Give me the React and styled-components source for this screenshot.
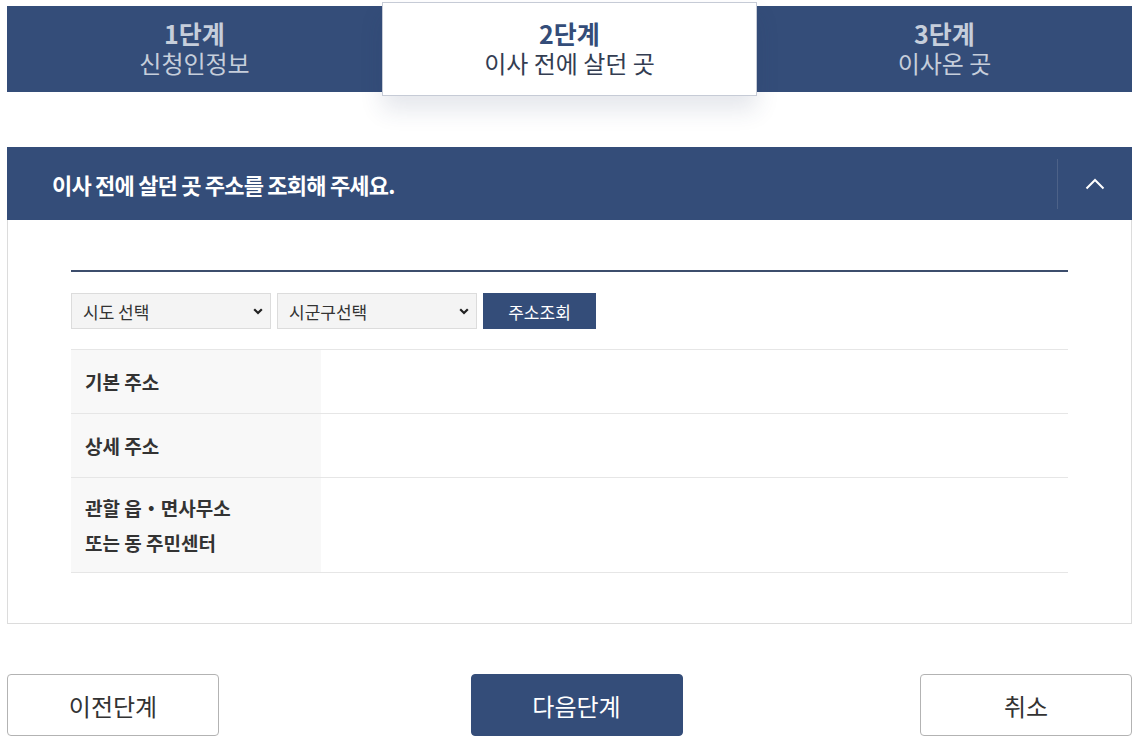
import React from "react";
import styled, { createGlobalStyle } from "styled-components";

const NAVY = "#344d79";
const FONT = `"Noto Sans CJK KR", "Noto Sans", sans-serif`;

const Global = createGlobalStyle`
  html, body { margin: 0; padding: 0; background: #fff; }
  body { font-family: ${FONT}; color: #333; }
  * { box-sizing: border-box; }
`;

const Page = styled.div`
  padding: 6px 8px 0 7px;
`;

const Steps = styled.ol`
  list-style: none;
  margin: 0;
  padding: 0;
  display: grid;
  grid-template-columns: repeat(3, 1fr);
  background: ${NAVY};
  height: 86px;
`;

const Step = styled.li`
  display: flex;
  flex-direction: column;
  align-items: center;
  justify-content: center;
  padding-bottom: 2px;
  line-height: 30px;
  color: #c6cedb;
  ${(p) =>
    p.$active &&
    `
    background: #fff;
    margin: -4px 0;
    border: 1px solid #c6cbd6;
    box-shadow: 0 14px 22px rgba(40, 60, 100, 0.12);
    color: #333d52;
    position: relative;
    z-index: 1;
  `}
`;

const StepNo = styled.strong`
  font-size: 25px;
  font-weight: 700;
  color: ${(p) => (p.$active ? NAVY : "inherit")};
`;

const StepName = styled.span`
  font-size: 24px;
  font-weight: 400;
`;

const Section = styled.section`
  margin-top: 55px;
`;

const SectionHead = styled.div`
  height: 73px;
  background: ${NAVY};
  display: flex;
  align-items: center;
  justify-content: space-between;
  padding-left: 45px;
`;

const SectionTitle = styled.h2`
  margin: 0;
  font-size: 22px;
  font-weight: 700;
  color: #fff;
  letter-spacing: -0.8px;
`;

const Toggle = styled.button`
  width: 75px;
  height: 50px;
  background: transparent;
  border: 0;
  border-left: 1px solid #4d6288;
  display: flex;
  align-items: center;
  justify-content: center;
  padding: 0;
  cursor: pointer;
`;

const SectionBody = styled.div`
  border: 1px solid #dcdcdc;
  border-top: 0;
  padding: 50px 63px 50px 63px;
`;

const Rule = styled.div`
  height: 2px;
  background: #3c4d6c;
`;

const SearchRow = styled.div`
  display: flex;
  gap: 6px;
  margin-top: 21px;
`;

const SelectWrap = styled.div`
  position: relative;
  width: 200px;
  height: 36px;
`;

const Select = styled.select`
  appearance: none;
  width: 100%;
  height: 100%;
  border: 1px solid #dcdcdc;
  background: #f4f4f4;
  font-family: ${FONT};
  font-size: 17px;
  color: #333;
  padding: 0 11px;
  border-radius: 0;
  outline: none;
`;

const Caret = styled.svg`
  position: absolute;
  right: 8px;
  top: 15px;
  pointer-events: none;
`;

const SearchButton = styled.button`
  width: 113px;
  height: 36px;
  border: 0;
  background: ${NAVY};
  color: #fff;
  font-family: ${FONT};
  font-size: 17px;
  cursor: pointer;
`;

const Table = styled.div`
  margin-top: 20px;
  border-top: 1px solid #e6e6e6;
`;

const Row = styled.div`
  display: grid;
  grid-template-columns: 250px 1fr;
  border-bottom: 1px solid #e6e6e6;
  min-height: ${(p) => p.$h || 64}px;
`;

const Label = styled.div`
  background: #f8f8f8;
  padding: 0 14px;
  display: flex;
  flex-direction: column;
  justify-content: center;
  font-size: 19px;
  font-weight: 700;
  color: #333;
  line-height: 35px;
`;

const Cell = styled.div``;

const Actions = styled.div`
  display: flex;
  justify-content: space-between;
  margin-top: 50px;
`;

const ActionButton = styled.button`
  width: 212px;
  height: 62px;
  border-radius: 4px;
  border: 1px solid ${(p) => (p.$primary ? NAVY : "#b3b3b3")};
  background: ${(p) => (p.$primary ? NAVY : "#fff")};
  color: ${(p) => (p.$primary ? "#fff" : "#333")};
  font-family: ${FONT};
  font-size: 24px;
  cursor: pointer;
  ${(p) => p.$primary && "margin-left: 14px;"}
`;

function SelectBox({ children }) {
  return (
    <SelectWrap>
      <Select>{children}</Select>
      <Caret width="10" height="7" viewBox="0 0 10 7">
        <path d="M1.2 1.2 L5 5 L8.8 1.2" fill="none" stroke="#222" strokeWidth="2.2" />
      </Caret>
    </SelectWrap>
  );
}

export default function App() {
  return (
    <>
      <Global />
      <Page>
        <Steps>
          <Step>
            <StepNo>1단계</StepNo>
            <StepName>신청인정보</StepName>
          </Step>
          <Step $active>
            <StepNo $active>2단계</StepNo>
            <StepName>이사 전에 살던 곳</StepName>
          </Step>
          <Step>
            <StepNo>3단계</StepNo>
            <StepName>이사온 곳</StepName>
          </Step>
        </Steps>

        <Section>
          <SectionHead>
            <SectionTitle>이사 전에 살던 곳 주소를 조회해 주세요.</SectionTitle>
            <Toggle aria-label="접기">
              <svg width="20" height="12" viewBox="0 0 20 12">
                <path d="M1.5 10.5 L10 2 L18.5 10.5" fill="none" stroke="#fff" strokeWidth="2" />
              </svg>
            </Toggle>
          </SectionHead>
          <SectionBody>
            <Rule />
            <SearchRow>
              <SelectBox>
                <option>시도 선택</option>
              </SelectBox>
              <SelectBox>
                <option>시군구선택</option>
              </SelectBox>
              <SearchButton>주소조회</SearchButton>
            </SearchRow>
            <Table>
              <Row>
                <Label>기본 주소</Label>
                <Cell />
              </Row>
              <Row>
                <Label>상세 주소</Label>
                <Cell />
              </Row>
              <Row $h={95}>
                <Label>
                  <span>관할 읍・면사무소</span>
                  <span>또는 동 주민센터</span>
                </Label>
                <Cell />
              </Row>
            </Table>
          </SectionBody>
        </Section>

        <Actions>
          <ActionButton>이전단계</ActionButton>
          <ActionButton $primary>다음단계</ActionButton>
          <ActionButton>취소</ActionButton>
        </Actions>
      </Page>
    </>
  );
}
